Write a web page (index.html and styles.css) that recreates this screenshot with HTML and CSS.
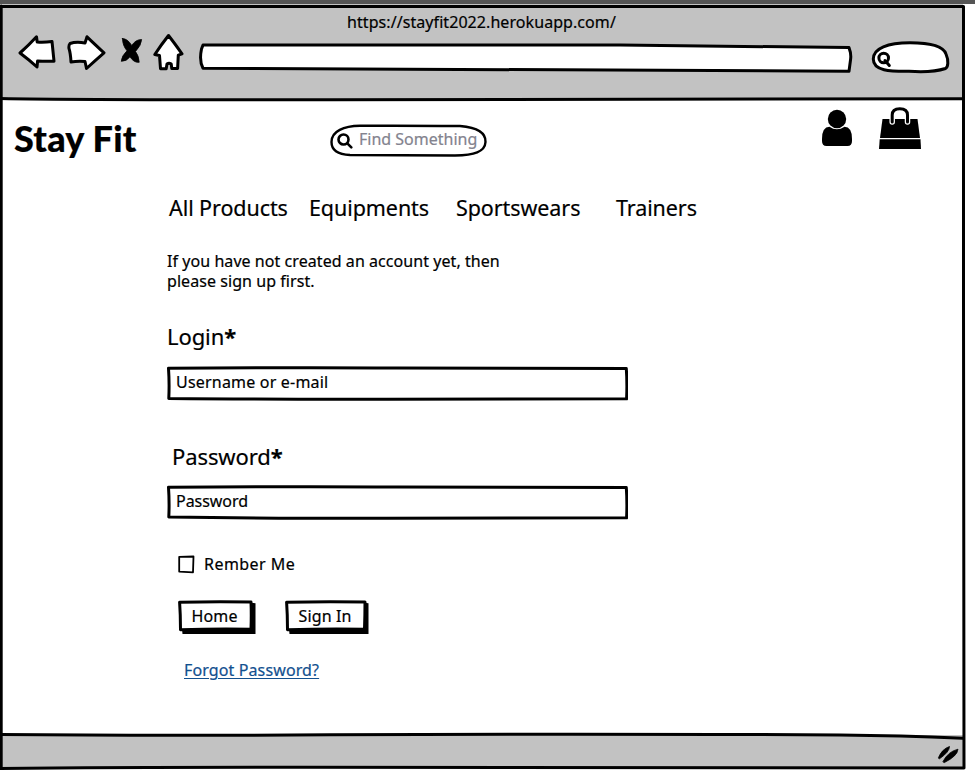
FILE: index.html
```html
<!DOCTYPE html>
<html lang="en">
<head>
<meta charset="utf-8">
<title>Stay Fit</title>
<link rel="stylesheet" href="styles.css">
</head>
<body>
<div class="strip"></div>
<div class="window">
  <svg class="frame" viewBox="0 4 975 768" aria-hidden="true">
    <path d="M1 6.500H963.500V300L964 768Q500 768.200 300 767.200Q120 767 0 768.400"/>
    <path d="M1.200 6V768"/>
    <path d="M0 98.500Q80 100 330 99.800T963 98.800"/>
    <path d="M0 734.500Q150 736 330 734.800Q600 733.600 840 735Q900 735.500 963 738.200"/>
  </svg>
  <header class="chrome">
    <div class="url">https://stayfit2022.herokuapp.com/</div>
    <div class="toolbar">
      <svg class="back" viewBox="18 34 38 38"><path d="M20 53Q28 46 36.500 36.800L37.200 42Q44 42.500 52 41.500L54 61.200Q45 61.500 37.600 61L37 67Q30 60.500 20 53Z"/></svg>
      <svg class="forward" viewBox="66 34 40 38"><path d="M70 43.500Q76 41.500 85 43L87 36.800Q94 43.500 104 52.800Q94 61.500 86.500 68.500L85 61.500Q77 61 71 62Q70.500 53 69 48.500Q68.500 45 70 43.500Z"/></svg>
      <svg class="stop" viewBox="118 34 26 38"><path d="M122.500 38.500Q127.500 38.500 131.800 45.500Q135.500 39.500 141.600 39.500Q141.500 45 135.500 51.500Q139 56 139.200 62.300Q134 63 130 56.800Q126.500 61.500 121.300 61.300Q121.500 56 127 50.800Q122.500 45.500 122.500 38.500Z"/></svg>
      <svg class="home" viewBox="152 32 32 40"><path d="M168.500 35.500Q174 42.500 182 53.800L178.300 55.200L177.600 68.500H171.800L171.200 64Q169 62.500 167 64L166.200 68.700H160.500L159.500 55.500L154.800 54.500Q161 45 168.500 35.500Z"/></svg>
      <svg class="address" viewBox="197 40 658 36"><path d="M203 45Q420 44.500 620 45Q750 46 849 47.600Q851.500 54 850.500 60L849 71.200Q500 71 203 68.200Q199 61 201.500 49Z"/></svg>
      <svg class="find" viewBox="869 38 83 38"><path d="M873.300 59C873.300 48 888 42.800 910 42.800C930 42.800 943 45.500 946 54C949 61 948 67 945.500 68.500C935 72 924 72.300 909 71.300C890 71.500 873.300 71 873.300 59Z"/><circle cx="883.700" cy="58" r="4.800"/><path d="M885 60.500L889.300 65.500"/></svg>
    </div>
  </header>

  <main class="page">
    <div class="masthead">
      <h1>Stay Fit</h1>
      <div class="search">
        <svg class="outline" viewBox="330 123 158 35"><path d="M331.500 142C331.500 131 344 126 360 125.800Q400 125.500 460 126C477 127.500 486 133 485.500 142C485 152 474 155 455 155.500Q400 155 350 155C338 154.500 331.500 150 331.500 142Z"/></svg>
        <svg class="lens" viewBox="0 0 16 16"><circle cx="6.500" cy="6.500" r="5"/><path d="M10.300 10.300L14.300 14.300"/></svg>
        <span>Find Something</span>
      </div>
      <svg class="user" viewBox="820 108 34 40"><circle cx="837" cy="119" r="9.200"/><path d="M829.500 126.800Q836.800 131.800 844.500 126.800Q852 127 852 139V141Q852 146 847.500 146H826.500Q822 146 822 141V139Q822 127 829.500 126.800Z"/></svg>
      <svg class="bag" viewBox="876 105 48 46"><path d="M882.500 119H917.500L920 138H880Z"/><path d="M879.700 139.200H920.500L921 149H879Z"/><path class="gap" d="M892.200 122V115Q892.200 108.700 899.800 108.700Q907.500 108.700 907.500 115V122"/><path class="handle" d="M892.200 122V115Q892.200 108.700 899.800 108.700Q907.500 108.700 907.500 115V122"/></svg>
    </div>

    <nav class="menu"><a>All Products</a><a>Equipments</a><a>Sportswears</a><a>Trainers</a></nav>

    <form class="login">
      <p>If you have not created an account yet, then<br>please sign up first.</p>
      <label class="label">Login<b>*</b></label>
      <div class="field">
        <svg class="outline" viewBox="0 0 461 35"><path d="M1.500 2.300Q130 1.300 230 2T459.300 2.500Q460.300 17 459.600 32.800Q340 33 220 33.200T1.800 32.500Q2.500 17 1.500 2.300Z"/></svg>
        <span>Username or e-mail</span>
      </div>
      <label class="label indent">Password<b>*</b></label>
      <div class="field">
        <svg class="outline" viewBox="0 0 461 35"><path d="M1.500 2.300Q130 1.300 230 2T459.300 2.500Q460.300 17 459.600 32.800Q340 33 220 33.200T1.800 32Q2.500 17 1.500 2.300Z"/></svg>
        <span>Password</span>
      </div>
      <div class="remember">
        <svg viewBox="0 0 17 19"><path d="M1.200 1.800L15.500 1.500L15 17.300L1.200 16.600Z"/></svg>
        <span>Rember Me</span>
      </div>
      <div class="actions">
        <div class="button home-button">
          <svg class="outline" viewBox="0 0 78 35"><path class="shadow" d="M4 29H71V2.500L77.500 3.200V34H4.500Z"/><path d="M1.600 2.200Q38 1.300 73 2Q73.500 15 73 29.300Q38 28.800 2.500 29.700Q2.500 15 1.600 2.200Z"/></svg>
          <span>Home</span>
        </div>
        <div class="button sign-button">
          <svg class="outline" viewBox="0 0 84 35"><path class="shadow" d="M4 29H77V2.500L83.500 3.200V34H4.500Z"/><path d="M1.600 2.200Q40 1.300 80 2Q80 15 79.500 29.300Q40 28.800 2.500 29.700Q2.500 15 1.600 2.200Z"/></svg>
          <span>Sign In</span>
        </div>
      </div>
      <a class="forgot">Forgot Password?</a>
    </form>
  </main>

  <footer class="status">
    <svg viewBox="936 744 26 20"><path d="M938.500 757.500Q942 749 949.500 746.500Q949.500 752 939.500 758.800Z"/><path d="M943 761.500Q948 751.500 958 749.200Q957.500 756 944.500 762.500Z"/></svg>
  </footer>
</div>
</body>
</html>
```
FILE: styles.css
```css
* { box-sizing: border-box; }

body {
  margin: 0;
  background: #fff;
  color: #000;
  font: 16px/20px "Noto Sans", sans-serif;
  -webkit-text-stroke: 0.2px;
}

svg { display: block; fill: #fff; stroke: #000; stroke-linejoin: round; stroke-linecap: round; }

.strip { height: 4px; background: #555; }

.window { position: relative; height: 768px; }

/* Hand-drawn frame lines laid over the window panels */
.frame { position: absolute; inset: 0; width: 975px; height: 768px; stroke-width: 3; pointer-events: none; }
.frame path { fill: none; }

.chrome { width: 963px; height: 95px; padding-top: 8px; background: #c2c2c2; }
.url { margin-left: 347px; letter-spacing: 0.07px; line-height: 20px; height: 20px; }

.toolbar { display: flex; align-items: flex-start; padding: 2px 0 0 18px; }
.toolbar svg { stroke-width: 3; flex: none; }
.back { width: 38px; height: 38px; }
.forward { width: 40px; height: 38px; margin-left: 10px; }
.toolbar .stop { width: 26px; height: 38px; margin-left: 12px; fill: #000; stroke-width: 0.8; }
.home { width: 32px; height: 40px; margin: -2px 0 0 8px; }
.address { width: 658px; height: 36px; margin: 6px 0 0 13px; }
.find { width: 83px; height: 38px; margin: 4px 0 0 14px; }

.page { height: 636px; width: 963px; }

.masthead { display: flex; align-items: flex-start; height: 95px; }
h1 {
  margin: 17px 0 0 14px;
  width: 130px;
  font: 900 36px/44px Lato, sans-serif;
  letter-spacing: 0.25px;
  white-space: nowrap;
}
.search {
  position: relative;
  display: flex;
  margin: 24px 0 0 186px;
  width: 158px;
  height: 35px;
  padding: 7px 0 0 7px;
  color: #83838e;
  white-space: nowrap;
}
.outline { position: absolute; left: 0; top: 0; width: 100%; height: 100%; stroke-width: 3; }
.search .outline { stroke-width: 2.4; }
.search span, .field span, .button span { position: relative; }
.lens { position: relative; width: 16px; height: 16px; margin: 3px 6px 0 0; stroke-width: 2.6; }
.lens circle { fill: none; }
.search span { margin-top: -1px; }
.user { width: 34px; height: 40px; margin: 9px 0 0 332px; fill: #000; stroke: none; }
.bag { width: 48px; height: 46px; margin: 6px 0 0 22px; fill: #000; stroke: none; }
.bag .gap, .bag .handle { fill: none; stroke-width: 3; stroke: #000; }
.bag .gap { stroke: #fff; stroke-width: 5.5; }

.menu {
  display: grid;
  grid-template-columns: 140px 147px 160px auto;
  padding-left: 169px;
  font-size: 21.5px;
  line-height: 28px;
  letter-spacing: -0.08px;
}

.login { margin: 29px 0 0 167px; width: 461px; }
.login p { margin: 0 0 31px; letter-spacing: 0.06px; }
.label { display: block; margin-bottom: 16px; font-size: 22px; line-height: 28px; letter-spacing: -0.1px; }
.label.indent { padding-left: 5px; margin-top: 41px; margin-bottom: 15px; }
.label b { font-weight: 700; }
.field { position: relative; height: 35px; padding: 6px 0 0 9px; letter-spacing: 0.2px; }
.field:nth-of-type(2) { letter-spacing: -0.05px; }
.remember { display: flex; margin: 34px 0 0 11px; letter-spacing: 0.45px; }
.remember svg { width: 17px; height: 19px; margin: 1px 9px 0 0; stroke-width: 1.8; }
.actions { display: flex; gap: 29px; margin: 26px 0 0 11px; }
.button { position: relative; height: 35px; padding: 6px 0 0 13.500px; letter-spacing: 0.15px; }
.home-button { width: 78px; }
.sign-button { width: 84px; }
.shadow { fill: #000; stroke: none; }
.forgot { display: inline-block; margin: 25px 0 0 17px; color: #12508f; letter-spacing: 0.12px; text-decoration: underline; text-decoration-thickness: 1px; text-underline-offset: 2px; }

.status { display: flex; justify-content: flex-end; width: 963px; height: 33px; padding: 9px 1px 0 0; background: #c2c2c2; }
.status svg { width: 26px; height: 20px; fill: #000; stroke-width: 0.8; }
```
